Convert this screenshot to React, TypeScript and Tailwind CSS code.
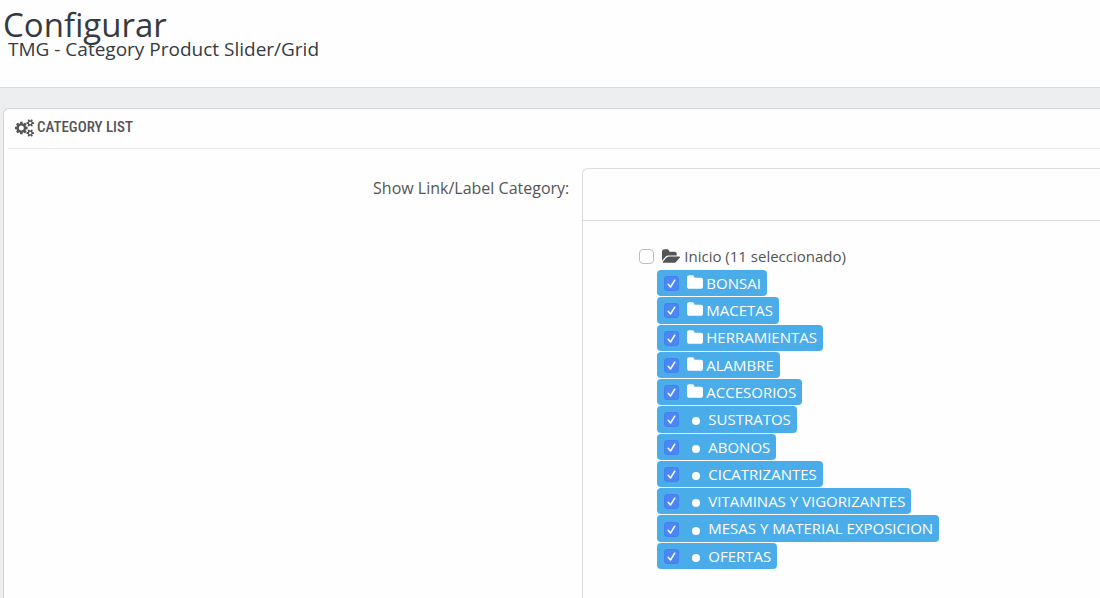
import React, { useState } from "react";

type Category = { name: string; folder: boolean };

const CATEGORIES: Category[] = [
  { name: "BONSAI", folder: true },
  { name: "MACETAS", folder: true },
  { name: "HERRAMIENTAS", folder: true },
  { name: "ALAMBRE", folder: true },
  { name: "ACCESORIOS", folder: true },
  { name: "SUSTRATOS", folder: false },
  { name: "ABONOS", folder: false },
  { name: "CICATRIZANTES", folder: false },
  { name: "VITAMINAS Y VIGORIZANTES", folder: false },
  { name: "MESAS Y MATERIAL EXPOSICION", folder: false },
  { name: "OFERTAS", folder: false },
];

function CogsIcon() {
  return (
    <svg viewBox="0 0 1920 1792" className="h-[18px] w-[19px] shrink-0" fill="currentColor" aria-hidden="true">
      <path d="M896 896q0-106-75-181t-181-75-181 75-75 181 75 181 181 75 181-75 75-181zm768 512q0-52-38-90t-90-38-90 38-38 90q0 53 37.5 90.5t90.5 37.5 90.5-37.5 37.5-90.5zm0-1024q0-52-38-90t-90-38-90 38-38 90q0 53 37.5 90.5t90.5 37.5 90.5-37.5 37.5-90.5zm-384 421v185q0 10-7 19.5t-16 10.5l-155 24q-11 35-32 76 34 48 90 115 7 11 7 20 0 12-7 19-23 30-82.5 89.5t-78.5 59.5q-11 0-21-7l-115-90q-37 19-77 31-11 108-23 155-7 24-30 24h-186q-11 0-20-7.5t-10-17.5l-23-153q-34-10-75-31l-118 89q-7 7-20 7-11 0-21-8-144-133-144-160 0-9 7-19 10-14 41-53t47-61q-23-44-35-82l-152-24q-10-1-17-9.5t-7-19.5v-185q0-10 7-19.5t16-10.5l155-24q11-35 32-76-34-48-90-115-7-11-7-20 0-12 7-20 22-30 82-89t79-59q11 0 21 7l115 90q34-18 77-32 11-108 23-154 7-24 30-24h186q11 0 20 7.5t10 17.5l23 153q34 10 75 31l118-89q8-7 20-7 11 0 21 8 144 133 144 160 0 8-7 19-12 16-42 54t-45 60q23 48 34 82l152 23q10 2 17 10.5t7 19.5zm640 533v140q0 16-149 31-12 27-30 52 51 113 51 138 0 4-4 7-122 71-124 71-8 0-46-47t-52-68q-20 2-30 2t-30-2q-14 21-52 68t-46 47q-2 0-124-71-4-3-4-7 0-25 51-138-18-25-30-52-149-15-149-31v-140q0-16 149-31 13-29 30-52-51-113-51-138 0-4 4-7 4-2 35-20t59-34 30-16q8 0 46 46.5t52 67.5q20-2 30-2t30 2q51-71 92-112l6-2q4 0 124 70 4 3 4 7 0 25-51 138 17 23 30 52 149 15 149 31zm0-1024v140q0 16-149 31-12 27-30 52 51 113 51 138 0 4-4 7-122 71-124 71-8 0-46-47t-52-68q-20 2-30 2t-30-2q-14 21-52 68t-46 47q-2 0-124-71-4-3-4-7 0-25 51-138-18-25-30-52-149-15-149-31v-140q0-16 149-31 13-29 30-52-51-113-51-138 0-4 4-7 4-2 35-20t59-34 30-16q8 0 46 46.5t52 67.5q20-2 30-2t30 2q51-71 92-112l6-2q4 0 124 70 4 3 4 7 0 25-51 138 17 23 30 52 149 15 149 31z" />
    </svg>
  );
}

function FolderIcon() {
  return (
    <svg viewBox="64 128 1664 1408" className="h-[14px] w-4 shrink-0" fill="currentColor" aria-hidden="true">
      <path d="M1728 608v704q0 92-66 158t-158 66h-1216q-92 0-158-66t-66-158v-960q0-92 66-158t158-66h320q92 0 158 66t66 158v32h672q92 0 158 66t66 158z" />
    </svg>
  );
}

function FolderOpenIcon() {
  return (
    <svg viewBox="0 128 1879 1408" className="h-[14px] w-[18px] shrink-0" fill="currentColor" aria-hidden="true">
      <path d="M1879 952q0 31-31 66l-336 396q-43 51-120.5 86.5t-143.5 35.5h-1088q-34 0-60.5-13t-26.5-43q0-31 31-66l336-396q43-51 120.5-86.5t143.5-35.5h1088q34 0 60.5 13t26.5 43zm-343-344v160h-832q-94 0-197 47.5t-164 119.5l-337 396-5 6q0-4-.5-12.5t-.5-12.5v-960q0-92 66-158t158-66h320q92 0 158 66t66 158v32h544q92 0 158 66t66 158z" />
    </svg>
  );
}

function Tick(props: { checked: boolean; onChange: () => void }) {
  return (
    <span className="grid size-[15px] shrink-0 place-items-center">
      <input
        type="checkbox"
        checked={props.checked}
        onChange={props.onChange}
        className="col-start-1 row-start-1 size-[15px] appearance-none rounded-[4px] border border-[#bdbdbd] bg-white checked:rounded-[3px] checked:border-[#4480ee] checked:bg-[#4a86f5]"
      />
      {props.checked && (
        <svg viewBox="0 0 15 15" className="pointer-events-none col-start-1 row-start-1 size-[15px]" fill="none" stroke="white" strokeWidth="1.5" strokeLinecap="round" strokeLinejoin="round" aria-hidden="true">
          <path d="M4.2 8.3 6.5 11 10.8 4.2" />
        </svg>
      )}
    </span>
  );
}

export default function App() {
  const [root, setRoot] = useState(false);
  const [selected, setSelected] = useState<boolean[]>(CATEGORIES.map(() => true));
  const count = selected.filter(Boolean).length;
  const toggle = (index: number) =>
    setSelected(selected.map((value, i) => (i === index ? !value : value)));

  return (
    <div className="flex min-h-screen flex-col bg-[#eceef0] font-['Open_Sans','Noto_Sans',sans-serif] text-[#555]">
      <header className="border-b border-[#d5dadb] bg-[#fefefe] pt-[9px] pb-[29px] text-[#363a41]">
        <h1 className="pl-[3px] text-[33px] leading-8">Configurar</h1>
        <p className="pl-2 text-[19px] leading-[17px]">TMG - Category Product Slider/Grid</p>
      </header>

      <main className="flex flex-1 flex-col pt-5 pl-[3px]">
        <section className="flex flex-1 flex-col rounded-tl-md border-t border-l border-[#d0d5d8] bg-[#fefefe] pl-1">
          <h2 className="flex h-10 items-center gap-[3px] border-b border-[#e8e8e8] pb-0.5 pl-[7px] font-['Roboto_Condensed','Liberation_Sans_Narrow',sans-serif] text-[15px] font-medium">
            <CogsIcon />
            CATEGORY LIST
          </h2>

          <div className="flex flex-1 pt-[19px]">
            <div className="w-[51.4%] text-right text-base leading-10">Show Link/Label Category:</div>
            <div className="ml-[13px] flex-1 rounded-tl-md border-t border-l border-[#dcdcdc]">
              <div className="h-[52px] border-b border-[#dcdcdc]" />
              <div className="pt-[21px] pb-7 pl-14">
                <label className="flex h-7 w-fit items-center text-[15px]">
                  <Tick checked={root} onChange={() => setRoot(!root)} />
                  <span className="ml-2 flex items-center gap-1">
                    <FolderOpenIcon />
                    Inicio ({count} seleccionado)
                  </span>
                </label>
                <ul className="grid h-[300px] auto-rows-fr pl-[18px]">
                  {CATEGORIES.map((category, index) => (
                    <li key={category.name} className="flex pb-px">
                      <label
                        className={
                          selected[index]
                            ? "flex items-center rounded-[4px] bg-[#4bacea] px-1.5 text-[15px] text-white"
                            : "flex items-center rounded-[4px] px-1.5 text-[15px]"
                        }
                      >
                        <span className="pt-px pl-px">
                          <Tick checked={selected[index]} onChange={() => toggle(index)} />
                        </span>
                        {category.folder ? (
                          <span className="mr-[3px] ml-2 pb-0.5">
                            <FolderIcon />
                          </span>
                        ) : (
                          <span className="mt-1 mr-2 ml-[13px] size-2 rounded-full bg-current" />
                        )}
                        {category.name}
                      </label>
                    </li>
                  ))}
                </ul>
              </div>
            </div>
          </div>
        </section>
      </main>
    </div>
  );
}
